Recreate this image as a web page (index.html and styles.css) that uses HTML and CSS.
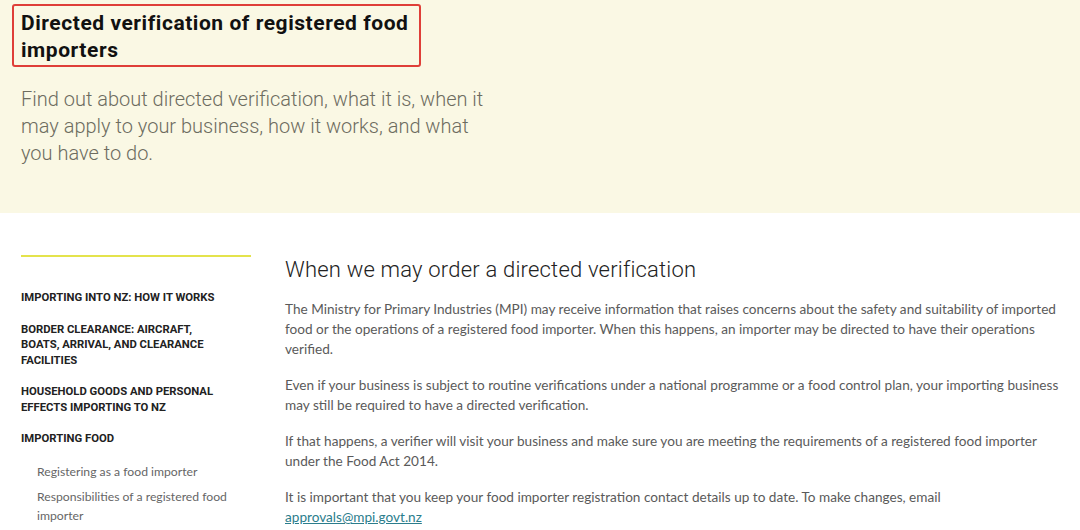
FILE: index.html
```html
<!DOCTYPE html>
<html lang="en">
<head>
<meta charset="utf-8">
<title>Directed verification of registered food importers</title>
<link rel="stylesheet" href="styles.css">
</head>
<body>
<header class="hero">
  <div class="title-box">
    <h1 class="title">Directed verification of registered food importers</h1>
  </div>
  <p class="intro">Find out about directed verification, what it is, when it may apply to your business, how it works, and what you have to do.</p>
</header>
<div class="content">
  <nav class="sidebar">
    <div class="rule"></div>
    <ul class="nav">
      <li class="nav-item">Importing into NZ: how it works</li>
      <li class="nav-item">Border clearance: aircraft, boats, arrival, and clearance facilities</li>
      <li class="nav-item">Household goods and personal effects importing to NZ</li>
      <li class="nav-item">Importing food</li>
    </ul>
    <ul class="subnav">
      <li class="sub-item">Registering as a food importer</li>
      <li class="sub-item">Responsibilities of a registered food importer</li>
    </ul>
  </nav>
  <main class="main">
    <h2 class="heading">When we may order a directed verification</h2>
    <p class="para">The Ministry for Primary Industries (MPI) may receive information that raises concerns about the safety and suitability of imported food or the operations of a registered food importer. When this happens, an importer may be directed to have their operations verified.</p>
    <p class="para">Even if your business is subject to routine verifications under a national programme or a food control plan, your importing business may still be required to have a directed verification.</p>
    <p class="para">If that happens, a verifier will visit your business and make sure you are meeting the requirements of a registered food importer under the Food Act 2014.</p>
    <p class="para">It is important that you keep your food importer registration contact details up to date. To make changes, email <a class="link" href="#">approvals@mpi.govt.nz</a></p>
  </main>
</div>
</body>
</html>
```
FILE: styles.css
```css
* { box-sizing: border-box; }
html, body { margin: 0; padding: 0; background: #ffffff; }
body { font-family: "Lato", "Liberation Sans", sans-serif; color: #555; }

.hero {
  background: #faf8e4;
  height: 213px;
  padding: 4px 0 0 12px;
}
.title-box {
  display: inline-block;
  border: 2px solid #df3f38;
  border-radius: 3px;
  padding: 4px 9px 1px 7px;
  width: 409px;
}
.title {
  margin: 0;
  font-family: "Roboto", "Liberation Sans", sans-serif;
  font-weight: 700;
  font-size: 21px;
  line-height: 27px;
  letter-spacing: 0.55px;
  color: #111;
}
.intro {
  margin: 19px 0 0 9px;
  width: 468px;
  font-family: "Roboto", "Liberation Sans", sans-serif;
  font-weight: 300;
  font-size: 20px;
  line-height: 27px;
  color: #6d6c5f;
}

.content {
  display: flex;
  padding: 42px 0 0 21px;
  gap: 34px;
}
.sidebar { width: 230px; flex: none; }
.rule { height: 2px; background: #e4e34c; }
.nav, .subnav { list-style: none; margin: 0; padding: 0; }
.nav { padding-top: 33px; }
.nav-item {
  font-family: "Roboto", "Liberation Sans", sans-serif;
  font-weight: 700;
  font-size: 11.3px;
  line-height: 15.5px;
  text-transform: uppercase;
  color: #222;
  margin-bottom: 16px;
  width: 205px;
}
.nav-item:last-child { margin-bottom: 15px; }
.subnav { padding: 0 0 0 16px; }
.sub-item {
  font-size: 12.2px;
  line-height: 19px;
  color: #666;
  margin-bottom: 6px;
  padding-right: 20px;
}

.main { width: 785px; flex: none; }
.heading {
  margin: 0 0 16px;
  padding-top: 2px;
  font-family: "Roboto", "Liberation Sans", sans-serif;
  font-weight: 300;
  font-size: 22px;
  line-height: 26px;
  color: #222;
  letter-spacing: 0.2px;
}
.para {
  margin: 0 0 16px;
  font-size: 13.6px;
  line-height: 20px;
  color: #5a5a5a;
}
.link { color: #2b7d8c; }
```
